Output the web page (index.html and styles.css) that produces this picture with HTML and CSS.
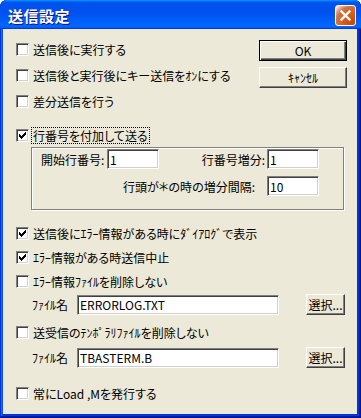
FILE: index.html
```html
<!DOCTYPE html>
<html lang="ja">
<head>
    <meta charset="UTF-8">
    <title>送信設定</title>
    <link rel="stylesheet" href="styles.css">
</head>
<body>
    <div class="window">
        <div class="titlebar">
            <span class="title">送信設定</span>
            <span class="close">
                <svg width="13" height="13" viewBox="0 0 13 13">
                    <path d="M2.5 2.5 L10.5 10.5 M10.5 2.5 L2.5 10.5" stroke="#fff" stroke-width="2.4" stroke-linecap="square"/>
                </svg>
            </span>
        </div>

        <div class="client">
            <div class="top">
                <div class="top-options">
                    <label class="check"><span class="box"></span>送信後に実行する</label>
                    <label class="check gap">
                        <span class="box"></span>送信後と実行後にキー送信をｵﾝにする
                    </label>
                    <label class="check gap"><span class="box"></span>差分送信を行う</label>
                </div>
                <div class="top-buttons">
                    <button class="btn default">OK</button>
                    <button class="btn">ｷｬﾝｾﾙ</button>
                </div>
            </div>

            <label class="check row-number">
                <span class="box checked"></span><span class="focus">行番号を付加して送る</span>
            </label>

            <div class="group">
                <div class="group-row">
                    <span class="start-label">開始行番号:</span>
                    <input class="field small" type="text" value="1">
                    <span class="push">行番号増分:</span>
                    <input class="field small" type="text" value="1">
                </div>
                <div class="group-row second">
                    <span class="push wide">行頭が＊の時の増分間隔:</span>
                    <input class="field small" type="text" value="10">
                </div>
            </div>

            <label class="check error-dialog">
                <span class="box checked"></span>送信後にｴﾗｰ情報がある時にﾀﾞｲｱﾛｸﾞで表示
            </label>
            <label class="check tight"><span class="box checked"></span>ｴﾗｰ情報がある時送信中止</label>
            <label class="check tight"><span class="box"></span>ｴﾗｰ情報ﾌｧｲﾙを削除しない</label>
            <div class="file-row first">
                <span class="file-label">ﾌｧｲﾙ名</span>
                <input class="field path" type="text" value="ERRORLOG.TXT">
                <button class="btn pick">選択...</button>
            </div>

            <label class="check temp"><span class="box"></span>送受信のﾃﾝﾎﾟﾗﾘﾌｧｲﾙを削除しない</label>
            <div class="file-row second">
                <span class="file-label">ﾌｧｲﾙ名</span>
                <input class="field path" type="text" value="TBASTERM.B">
                <button class="btn pick">選択...</button>
            </div>

            <label class="check last"><span class="box"></span>常にLoad ,Mを発行する</label>
        </div>
    </div>
</body>
</html>
```

FILE: styles.css
```css
body {
    margin: 0;
    background: #fff;
    font-family: "Noto Sans CJK JP", "Noto Sans", sans-serif;
    font-size: 12px;
    font-feature-settings: "palt";
    color: #000;
}

.window {
    width: 361px;
    height: 418px;
    box-sizing: border-box;
    padding: 0 4px 4px 3px;
    border-radius: 7px 7px 0 0;
    background: #0831d9;
    box-shadow: inset -1px -1px #00138c, inset 1px 1px #0831d9,
                inset -2px -2px #001ea0, inset 2px 2px #166aee,
                inset -3px -3px #003bda, inset 3px 3px #0855dd;
    display: flex;
    flex-direction: column;
}

.titlebar {
    height: 29px;
    margin: 0 -4px 0 -3px;
    padding: 0 5px 0 8px;
    border-radius: 7px 7px 0 0;
    background: linear-gradient(180deg, #0997ff, #0053ee 8%, #0050ee 40%, #06f 88%, #06f 93%, #005bff 95%, #003dd7 96%, #003dd7);
    display: flex;
    align-items: center;
    justify-content: space-between;
}

.title {
    color: #fff;
    font-weight: bold;
    font-size: 15px;
    letter-spacing: 0.5px;
    font-feature-settings: normal;
    text-shadow: 1px 1px #0f1089;
    margin-top: 1px;
}

.close {
    width: 21px;
    height: 21px;
    box-sizing: border-box;
    border: 1px solid #fff;
    border-radius: 3px;
    background: radial-gradient(circle at 90% 90%, #cc4600 0%, #dc6527 55%, #cd7546 70%, #ffccb2 90%, #fff 100%);
    display: flex;
    align-items: center;
    justify-content: center;
    margin-top: 1px;
}

.client {
    flex: 1;
    background: #ece9d8;
    padding: 10px 0 0 13px;
}

.top {
    display: flex;
}

.top-options {
    flex: 1;
}

.top-buttons {
    display: flex;
    flex-direction: column;
    gap: 6px;
    margin: 1px 10px 0 0;
}

.check {
    display: flex;
    align-items: center;
    height: 20px;
    white-space: nowrap;
}

.check.gap {
    margin-top: 6px;
}

.box {
    width: 13px;
    height: 13px;
    box-sizing: border-box;
    flex: none;
    margin-right: 4px;
    background: #fff;
    border: 1px solid;
    border-color: #808080 #fff #fff #808080;
    box-shadow: inset 1px 1px #404040, inset -1px -1px #d4d0c8;
}

.box.checked {
    background: #fff url("data:image/svg+xml,%3Csvg xmlns='http://www.w3.org/2000/svg' width='11' height='11' shape-rendering='crispEdges'%3E%3Cpath d='M2 4h1v3h-1zM3 5h1v3h-1zM4 6h1v3h-1zM5 5h1v3h-1zM6 4h1v3h-1zM7 3h1v3h-1zM8 2h1v3h-1z' fill='%23000'/%3E%3C/svg%3E") no-repeat 0 0;
}

.focus {
    outline: 1px dotted #000;
    padding: 0 1px;
    margin-left: -1px;
    line-height: 15px;
}

.row-number {
    margin-top: 14px;
}

.btn {
    font-family: "Noto Sans CJK JP", "Noto Sans", sans-serif;
    font-size: 12px;
    font-feature-settings: "palt";
    color: #000;
    background: #ece9d8;
    width: 88px;
    height: 21px;
    padding: 0;
    box-sizing: border-box;
    border: 1px solid;
    border-color: #fff #404040 #404040 #fff;
    box-shadow: inset -1px -1px #808080;
    line-height: 17px;
}

.btn.default {
    border-color: #000;
    box-shadow: inset 1px 1px #fff, inset -1px -1px #404040, inset -2px -2px #808080;
}

.group {
    margin: 2px 0 0 15px;
    width: 313px;
    height: 63px;
    box-sizing: border-box;
    border: 1px solid #808080;
    box-shadow: inset 1px 1px #fff, 1px 1px #fff;
    padding: 1px 24px 0 9px;
}

.group-row {
    display: flex;
    align-items: center;
    height: 20px;
}

.group-row.second {
    margin-top: 7px;
    justify-content: flex-end;
}

.start-label {
    width: 66px;
    flex: none;
}

.push {
    margin-left: auto;
    margin-right: 2px;
}

.push.wide {
    margin-right: 12px;
}

.field {
    height: 20px;
    box-sizing: border-box;
    background: #fff;
    border: 1px solid;
    border-color: #808080 #fff #fff #808080;
    box-shadow: inset 1px 1px #404040, inset -1px -1px #d4d0c8;
    font-family: "Noto Sans CJK JP", "Noto Sans", sans-serif;
    font-size: 12px;
    padding: 0 2px;
    margin: 0;
    outline: none;
}

.field.small {
    width: 52px;
}

.field.path {
    width: 202px;
}

.error-dialog {
    margin-top: 13px;
}

.check.tight {
    margin-top: 4px;
}

.file-row {
    display: flex;
    align-items: center;
    height: 21px;
    padding-left: 16px;
}

.file-row.first {
    margin-top: 3px;
}

.file-row.second {
    margin-top: 5px;
}

.file-label {
    width: 45px;
    flex: none;
}

.btn.pick {
    width: 39px;
    margin-left: 27px;
}

.temp {
    margin-top: 7px;
}

.last {
    margin-top: 15px;
}
```
